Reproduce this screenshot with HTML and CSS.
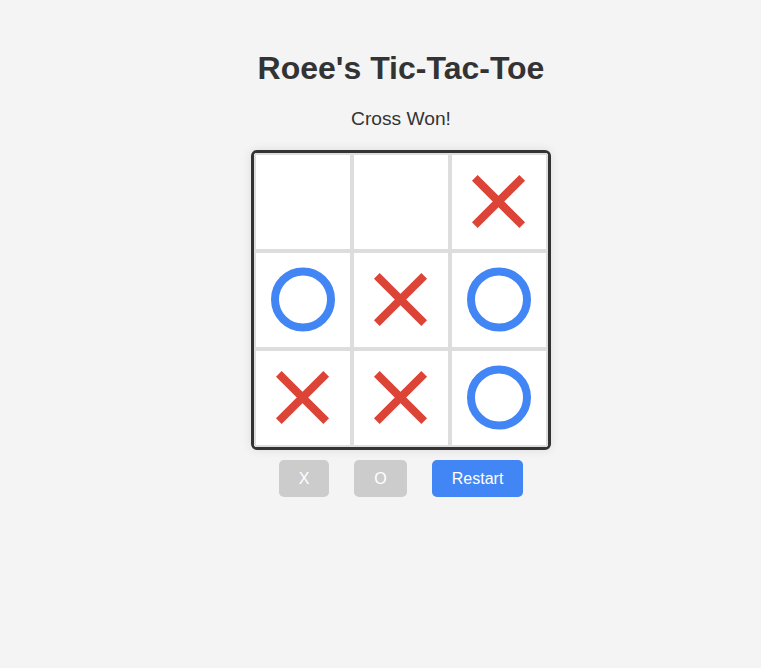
FILE: index.html
```html
<!DOCTYPE html>
<html lang="en">
<head>
<meta charset="utf-8">
<title>Roee's Tic-Tac-Toe</title>
<link rel="stylesheet" href="styles.css">
</head>
<body>
<main class="app">
  <h1 class="title">Roee's Tic-Tac-Toe</h1>
  <p class="status">Cross Won!</p>
  <div class="board">
    <div class="cell"></div>
    <div class="cell"></div>
    <div class="cell"><svg class="mark" viewBox="0 0 98 98"><path class="cross" d="M72.2 24.8 L24.8 72.2 M24.8 24.8 L72.2 72.2"/></svg></div>
    <div class="cell"><svg class="mark" viewBox="0 0 98 98"><circle class="nought" cx="49" cy="48.5" r="28"/></svg></div>
    <div class="cell"><svg class="mark" viewBox="0 0 98 98"><path class="cross" d="M72.2 24.8 L24.8 72.2 M24.8 24.8 L72.2 72.2"/></svg></div>
    <div class="cell"><svg class="mark" viewBox="0 0 98 98"><circle class="nought" cx="49" cy="48.5" r="28"/></svg></div>
    <div class="cell"><svg class="mark" viewBox="0 0 98 98"><path class="cross" d="M72.2 24.8 L24.8 72.2 M24.8 24.8 L72.2 72.2"/></svg></div>
    <div class="cell"><svg class="mark" viewBox="0 0 98 98"><path class="cross" d="M72.2 24.8 L24.8 72.2 M24.8 24.8 L72.2 72.2"/></svg></div>
    <div class="cell"><svg class="mark" viewBox="0 0 98 98"><circle class="nought" cx="49" cy="48.5" r="28"/></svg></div>
  </div>
  <div class="controls">
    <button class="btn btn-muted">X</button>
    <button class="btn btn-muted">O</button>
    <button class="btn btn-primary">Restart</button>
  </div>
</main>
</body>
</html>
```
FILE: styles.css
```css
html, body {
  margin: 0;
  padding: 0;
  background: #f4f4f4;
  font-family: "Liberation Sans", Arial, sans-serif;
  color: #333;
}

.app {
  display: flex;
  flex-direction: column;
  align-items: center;
  padding: 50px 0 0 41px;
}

.title {
  margin: 0;
  font-size: 32px;
  font-weight: bold;
  line-height: normal;
  color: #333;
}

.status {
  margin: 21px 0 0;
  font-size: 19.2px;
  line-height: normal;
}

.board {
  margin-top: 20px;
  display: grid;
  grid-template-columns: repeat(3, 98px);
  grid-template-rows: repeat(3, 98px);
  border: 3px solid #333;
  border-radius: 6px;
  box-shadow: 0 0 10px rgba(0, 0, 0, 0.1);
  background: #fff;
  overflow: hidden;
}

.cell {
  box-sizing: border-box;
  width: 98px;
  height: 98px;
  border: 2px solid #ddd;
  background: #fff;
  position: relative;
}

.mark {
  position: absolute;
  left: -2px;
  top: -2px;
  width: 98px;
  height: 98px;
}

.cross {
  stroke: #db4437;
  stroke-width: 8;
  fill: none;
}

.nought {
  stroke: #4285f4;
  stroke-width: 8;
  fill: none;
}

.controls {
  margin-top: 10px;
  display: flex;
  gap: 25px;
}

.btn {
  height: 37px;
  padding: 0 20px;
  border: none;
  border-radius: 5px;
  font-family: "Liberation Sans", Arial, sans-serif;
  font-size: 16px;
  color: #fff;
  cursor: pointer;
}

.btn-muted {
  background: #ccc;
}

.btn-primary {
  background: #4285f4;
}
```
